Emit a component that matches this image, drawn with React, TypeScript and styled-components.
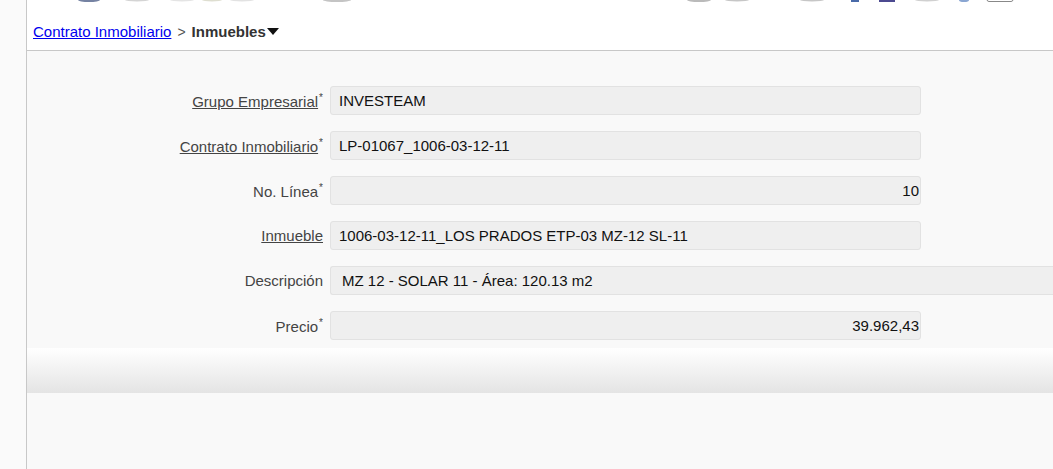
import React from "react";
import styled, { createGlobalStyle } from "styled-components";

const Global = createGlobalStyle`
  html, body { margin: 0; padding: 0; height: 100%; background: #f9f9f9; }
  #root { height: 100%; }
  body { font-family: "Liberation Sans", Arial, sans-serif; }
`;

const Page = styled.div`
  display: grid;
  grid-template-columns: 27px 1fr;
  height: 469px;
  overflow: hidden;
`;

const Sidebar = styled.aside`
  background: #fafafa;
  border-right: 1px solid #c8c8c8;
`;

const Main = styled.main`
  display: flex;
  flex-direction: column;
  background: #f9f9f9;
  min-width: 0;
`;

const Header = styled.header`
  height: 50px;
  background: #fff;
  border-bottom: 1px solid #c8c8c8;
  display: flex;
  flex-direction: column;
`;

const LogoStrip = styled.svg`
  display: block;
  height: 4px;
  width: 100%;
`;

const Breadcrumb = styled.nav`
  display: flex;
  align-items: center;
  padding: 19px 0 0 6px;
  font-size: 15px;
  gap: 6px;
`;

const CrumbLink = styled.a`
  color: #0000ee;
  text-decoration: underline;
`;

const Sep = styled.span`
  color: #555;
  font-size: 14px;
`;

const Current = styled.span`
  font-weight: bold;
  color: #333;
  display: flex;
  align-items: center;
`;

const Caret = styled.span`
  display: inline-block;
  width: 0;
  height: 0;
  border-left: 6px solid transparent;
  border-right: 6px solid transparent;
  border-top: 7px solid #111;
  margin-left: 1px;
`;

const Form = styled.section`
  padding: 35px 0 8px 0;
  display: flex;
  flex-direction: column;
  gap: 16px;
`;

const Row = styled.div<{ $wide?: boolean }>`
  display: grid;
  grid-template-columns: 296px ${p => (p.$wide ? "1fr" : "591px")};
  column-gap: 7px;
  align-items: center;
  height: 29px;
`;

const Label = styled.label<{ $link?: boolean }>`
  justify-self: end;
  font-size: 15px;
  color: #444;
  text-decoration: ${p => (p.$link ? "underline" : "none")};
  white-space: nowrap;
`;

const Req = styled.sup`
  font-size: 10px;
  color: #444;
  margin-left: 1px;
  vertical-align: 6px;
  display: inline-block;
`;

const Field = styled.div<{ $num?: boolean; $wide?: boolean }>`
  height: 29px;
  box-sizing: border-box;
  background: #efefef;
  border: 1px solid #e2e2e2;
  border-radius: ${p => (p.$wide ? "3px 0 0 3px" : "3px")};
  border-right: ${p => (p.$wide ? "none" : "1px solid #e2e2e2")};
  display: flex;
  align-items: center;
  justify-content: ${p => (p.$num ? "flex-end" : "flex-start")};
  padding: ${p => (p.$num ? "0 1px 0 0" : p.$wide ? "0 0 0 11px" : "0 0 0 8px")};
  font-size: 15px;
  color: #111;
  white-space: nowrap;
`;

const Bar = styled.div`
  height: 45px;
  background: linear-gradient(#ffffff, #e4e4e4);
`;

const Rest = styled.div`
  flex: 1;
  background: #f9f9f9;
`;

type F = { label: string; value: string; link?: boolean; req?: boolean; num?: boolean; wide?: boolean };

const fields: F[] = [
  { label: "Grupo Empresarial", value: "INVESTEAM", link: true, req: true },
  { label: "Contrato Inmobiliario", value: "LP-01067_1006-03-12-11", link: true, req: true },
  { label: "No. Línea", value: "10", req: true, num: true },
  { label: "Inmueble", value: "1006-03-12-11_LOS PRADOS ETP-03 MZ-12 SL-11", link: true },
  { label: "Descripción", value: "MZ 12 - SOLAR 11 - Área: 120.13 m2", wide: true },
  { label: "Precio", value: "39.962,43", req: true, num: true },
];

export default function App() {
  return (
    <>
      <Global />
      <Page>
        <Sidebar />
        <Main>
          <Header>
            <LogoStrip viewBox="0 0 1026 4" preserveAspectRatio="none">
              <ellipse cx="62" cy="0" rx="11" ry="2" fill="#3a4d7a" opacity="0.7" />
              <ellipse cx="110" cy="0" rx="12" ry="1.5" fill="#d4d4d4" />
              <ellipse cx="155" cy="0" rx="12" ry="1.5" fill="#e4e4e4" />
              <ellipse cx="185" cy="0" rx="10" ry="1.5" fill="#deded0" />
              <ellipse cx="215" cy="0" rx="12" ry="1.5" fill="#e2e2e2" />
              <ellipse cx="310" cy="0" rx="14" ry="2" fill="#c4c4c4" />
              <ellipse cx="672" cy="0" rx="12" ry="2" fill="#bababa" />
              <ellipse cx="710" cy="0" rx="12" ry="1.5" fill="#c6c6c6" />
              <ellipse cx="785" cy="0" rx="12" ry="1.5" fill="#c6c6c6" />
              <rect x="824" y="0" width="8" height="2" fill="#4a6aa8" />
              <rect x="852" y="0" width="16" height="2" fill="#4c4a90" />
              <ellipse cx="900" cy="0" rx="12" ry="1.5" fill="#d0d0d0" />
              <ellipse cx="937" cy="0" rx="5" ry="2" fill="#8aa6d2" />
              <rect x="960" y="-3" width="26" height="4.5" rx="2" fill="none" stroke="#888" strokeWidth="1" />
            </LogoStrip>
            <Breadcrumb>
              <CrumbLink href="#">Contrato Inmobiliario</CrumbLink>
              <Sep>&gt;</Sep>
              <Current>
                Inmuebles
                <Caret />
              </Current>
            </Breadcrumb>
          </Header>
          <Form>
            {fields.map(f => (
              <Row key={f.label} $wide={f.wide}>
                <Label $link={f.link}>
                  {f.label}
                  {f.req && <Req>*</Req>}
                </Label>
                <Field $num={f.num} $wide={f.wide}>
                  {f.value}
                </Field>
              </Row>
            ))}
          </Form>
          <Bar />
          <Rest />
        </Main>
      </Page>
    </>
  );
}
